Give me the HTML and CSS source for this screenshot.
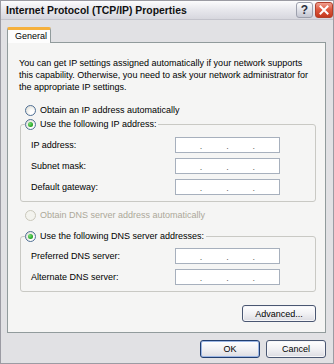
FILE: index.html
```html
<!DOCTYPE html>
<html lang="en">
<head>
    <meta charset="UTF-8">
    <title>Internet Protocol (TCP/IP) Properties</title>
    <link rel="stylesheet" href="styles.css">
</head>
<body>
    <div class="window">
        <div class="titlebar">
            <span class="title">Internet Protocol (TCP/IP) Properties</span>
            <span class="tb-btn help">?</span>
            <span class="tb-btn close">
                <svg width="10" height="10" viewBox="0 0 10 10"><path d="M1.5 1.5 L8.5 8.5 M8.5 1.5 L1.5 8.5" stroke="#fff" stroke-width="2" stroke-linecap="square"/></svg>
            </span>
        </div>
        <div class="client">
            <div class="tabs">
                <div class="tab active">General</div>
            </div>
            <div class="page">
                <p class="intro">You can get IP settings assigned automatically if your network supports<br>this capability. Otherwise, you need to ask your network administrator for<br>the appropriate IP settings.</p>

                <div class="radio first"><span class="radio-mark"></span>Obtain an IP address automatically</div>

                <fieldset class="group">
                    <legend><span class="radio checked"><span class="radio-mark"></span>Use the following IP address:</span></legend>
                    <div class="field"><span class="field-label">IP address:</span><span class="ipbox"><i>.</i><i>.</i><i>.</i></span></div>
                    <div class="field"><span class="field-label">Subnet mask:</span><span class="ipbox"><i>.</i><i>.</i><i>.</i></span></div>
                    <div class="field"><span class="field-label">Default gateway:</span><span class="ipbox"><i>.</i><i>.</i><i>.</i></span></div>
                </fieldset>

                <div class="radio disabled"><span class="radio-mark"></span>Obtain DNS server address automatically</div>

                <fieldset class="group dns">
                    <legend><span class="radio checked"><span class="radio-mark"></span>Use the following DNS server addresses:</span></legend>
                    <div class="field"><span class="field-label">Preferred DNS server:</span><span class="ipbox"><i>.</i><i>.</i><i>.</i></span></div>
                    <div class="field"><span class="field-label">Alternate DNS server:</span><span class="ipbox"><i>.</i><i>.</i><i>.</i></span></div>
                </fieldset>

                <div class="page-actions">
                    <button class="btn btn-advanced">Advanced...</button>
                </div>
            </div>
            <div class="actions">
                <button class="btn btn-default">OK</button>
                <button class="btn">Cancel</button>
            </div>
        </div>
    </div>
</body>
</html>
```

FILE: styles.css
```css
:root {
    --face: #e1e1e4;
    --page: #f5f5f4;
    --frame: #9b9ba3;
    --tab-line: #919b9c;
    --group-line: #c9c9c4;
    --input-line: #a7b0bd;
    --text: #000;
    --muted: #aca899;
}
html, body {
    margin: 0;
    padding: 0;
    background: var(--face);
}
body {
    font-family: 'Liberation Sans', Arial, sans-serif;
    font-size: 9px;
    color: var(--text);
}
.window {
    width: 334px;
    height: 364px;
    box-sizing: border-box;
    border: 1px solid var(--frame);
    background: var(--face);
}
/* Title bar */
.titlebar {
    height: 18px;
    display: flex;
    align-items: center;
    gap: 2px;
    padding-left: 5px;
    background: linear-gradient(180deg, #fcfcfd 0%, #e9e9ee 45%, #d7d7de 100%);
    border-bottom: 1px solid #c3c3cb;
}
.title {
    flex: 1;
    font-size: 10.4px;
    font-weight: bold;
    color: #111;
    white-space: nowrap;
}
.tb-btn {
    width: 17px;
    height: 16px;
    box-sizing: border-box;
    border-radius: 3px;
    display: flex;
    align-items: center;
    justify-content: center;
}
.help {
    border: 1px solid #9da0ad;
    background: linear-gradient(180deg, #ffffff, #dadbe3 60%, #c5c7d2);
    font-size: 12px;
    font-weight: bold;
    color: #2b2f3e;
}
.close {
    width: 18px;
    border: 1px solid #b2402c;
    background: linear-gradient(180deg, #f0a090, #de5a40 45%, #c5381d);
}
/* Client area */
.client {
    padding: 7px 7px 0 6px;
}
.tabs {
    display: flex;
}
.tab {
    position: relative;
    z-index: 1;
    width: 44px;
    height: 16px;
    box-sizing: border-box;
    margin-bottom: -1px;
    padding-left: 7px;
    line-height: 13px;
    border: 1px solid var(--tab-line);
    border-top: 3px solid #f5b03c;
    border-bottom: none;
    border-radius: 2px 2px 0 0;
    background: #fdfdfd;
}
.page {
    height: 291px;
    box-sizing: border-box;
    padding: 14px 9px 0 12px;
    border: 1px solid var(--tab-line);
    background: var(--page);
}
.intro {
    margin: 0 0 0 -1px;
    line-height: 12px;
    white-space: nowrap;
}
/* Radio buttons */
.radio {
    display: flex;
    align-items: center;
    height: 14px;
    margin-left: 5px;
    white-space: nowrap;
}
.radio.first {
    margin-top: 10px;
}
.radio.disabled {
    margin-top: 6px;
    color: var(--muted);
}
.radio-mark {
    width: 11px;
    height: 11px;
    box-sizing: border-box;
    margin-right: 4px;
    border: 1px solid #4f6f95;
    border-radius: 50%;
    background: radial-gradient(circle at 65% 70%, #ffffff 20%, #e6e6e0 70%, #d4d4cc);
    display: flex;
    align-items: center;
    justify-content: center;
}
.radio.checked .radio-mark::after {
    content: "";
    width: 5px;
    height: 5px;
    border-radius: 50%;
    background: radial-gradient(circle at 35% 35%, #7be27b, #21a121 70%);
}
.radio.disabled .radio-mark {
    border-color: #cac8bb;
    background: #f3f3ee;
}
/* Group boxes */
.group {
    margin: 0;
    padding: 6px 0 6px 0;
    border: 1px solid var(--group-line);
    border-radius: 3px;
}
.group.dns {
    margin-top: 7px;
    padding-top: 5px;
}
.group legend {
    padding: 0 2px 0 0;
    margin-left: 4px;
}
.group legend .radio {
    margin-left: 0;
}
.field {
    display: flex;
    align-items: center;
    height: 16px;
    padding-left: 10px;
}
.field + .field {
    margin-top: 5px;
}
.field-label {
    width: 144px;
}
.ipbox {
    width: 105px;
    height: 16px;
    box-sizing: border-box;
    border: 1px solid var(--input-line);
    background: #fff;
    display: flex;
    justify-content: space-evenly;
    align-items: flex-end;
}
.ipbox i {
    font-style: normal;
    font-size: 9px;
    line-height: 11px;
    color: #666;
}
/* Buttons */
.btn {
    height: 17px;
    padding: 0;
    box-sizing: border-box;
    font-family: inherit;
    font-size: 9px;
    color: #000;
    border: 1px solid #4a5772;
    border-radius: 3px;
    background: linear-gradient(180deg, #ffffff, #f1f1f4 50%, #dcdce2);
    box-shadow: inset 0 0 0 1px #f6f6f8;
}
.page-actions {
    display: flex;
    justify-content: flex-end;
    margin-top: 13px;
}
.btn-advanced {
    width: 74px;
}
.actions {
    display: flex;
    justify-content: flex-end;
    gap: 6px;
    margin-top: 7px;
}
.actions .btn {
    width: 60px;
    height: 18px;
}
.btn-default {
    border-color: #203d70;
    box-shadow: inset 0 0 0 1px #9cb6e4;
}
```
